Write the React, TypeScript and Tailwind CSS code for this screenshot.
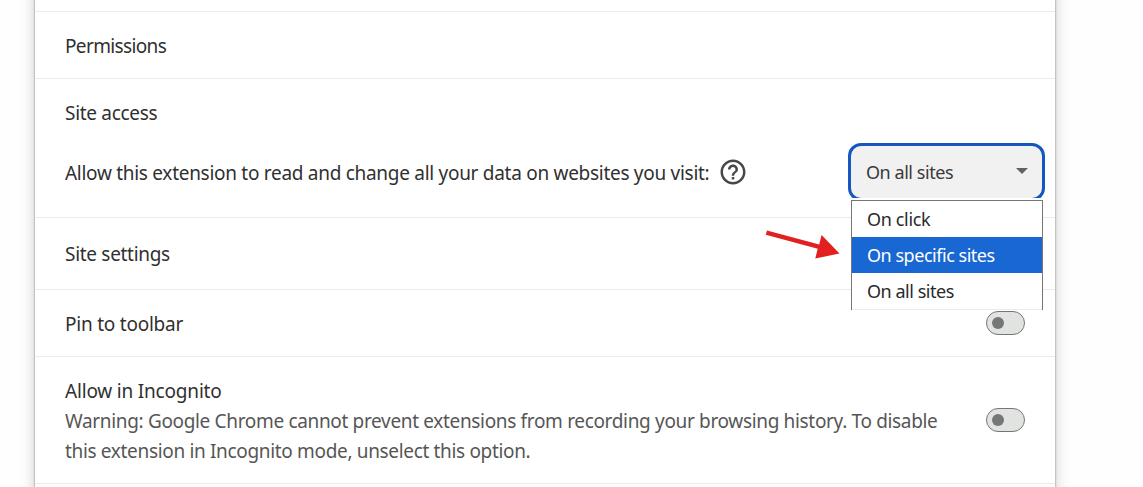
import React from "react";

function Toggle() {
  return (
    <button
      role="switch"
      aria-checked="false"
      className="flex h-6 w-[39px] shrink-0 items-center rounded-full border border-[#747775] bg-[#e1e3e1] pl-[5px]"
    >
      <span className="size-3 rounded-full bg-[#747775]" />
    </button>
  );
}

function HelpIcon() {
  return (
    <svg viewBox="0 0 24 24" className="ml-[9px] size-[30px] shrink-0" fill="#474747">
      <path d="M11 18h2v-2h-2v2zm1-16C6.480 2 2 6.480 2 12s4.480 10 10 10 10-4.480 10-10S17.520 2 12 2zm0 18c-4.410 0-8-3.590-8-8s3.590-8 8-8 8 3.590 8 8-3.590 8-8 8zm0-14c-2.210 0-4 1.790-4 4h2c0-1.100.9-2 2-2s2 .9 2 2c0 2-3 1.750-3 5h2c0-2.250 3-2.500 3-5 0-2.210-1.790-4-4-4z" />
    </svg>
  );
}

function SiteAccessSelect() {
  return (
    <div className="relative h-[55px] w-[197px] shrink-0">
      <div className="h-full overflow-hidden">
        <div className="flex h-[58px] items-center justify-between rounded-[13px] border-3 border-[#1657bf] bg-[#f1f1f1] pr-[14px] pl-[15px] text-[18px] text-[#3a3a3a]">
          <span className="tracking-[-0.45px]">On all sites</span>
          <svg viewBox="0 0 12 6" className="-mt-[2px] h-[6px] w-[12px]" fill="#5f6368">
            <path d="M0 0h12L6 6z" />
          </svg>
        </div>
      </div>
      <ul className="absolute top-[57px] left-[3px] h-[110px] w-[192px] border border-b-0 border-[#767676] bg-white text-[18px] leading-9 text-[#2a2a2a]">
        <li className="h-9 pl-[15px] tracking-[-0.35px]">On click</li>
        <li className="h-9 bg-[#1967d2] pl-[15px] tracking-[-0.47px] text-white">On specific sites</li>
        <li className="h-[37px] border-b border-[#ebebeb] pl-[15px] tracking-[-0.47px]">On all sites</li>
      </ul>
    </div>
  );
}

export default function App() {
  return (
    <div className="flex h-[487px] items-center overflow-hidden bg-[#fefefe] font-['Noto_Sans',sans-serif] text-[19px] leading-[30px] text-[#303030]">
      <main className="ml-[35px] h-[527px] w-[1020px] shrink-0 bg-white pt-5 shadow-[0_0_2px_rgba(0,0,0,0.45),0_0_14px_rgba(0,0,0,0.2)]">
        <div className="h-3 border-b border-[#ebebeb]" />
        <section className="flex h-[67px] items-center border-b border-[#ebebeb] pt-[2px] pl-[30px]">
          <h2 className="tracking-[-0.64px]">Permissions</h2>
        </section>
        <section className="h-[139px] border-b border-[#ebebeb] pt-[19px] pr-[10px] pl-[30px]">
          <h2 className="tracking-[-0.3px]">Site access</h2>
          <div className="mt-[15px] flex items-start justify-between">
            <div className="flex h-[58px] items-center">
              <span className="pt-[2px] whitespace-nowrap tracking-[-0.287px]">
                Allow this extension to read and change all your data on websites you visit:
              </span>
              <HelpIcon />
            </div>
            <SiteAccessSelect />
          </div>
        </section>
        <section className="flex h-[72px] items-center border-b border-[#ebebeb] pl-[30px]">
          <h2 className="tracking-[-0.3px]">Site settings</h2>
        </section>
        <section className="flex h-[67px] items-center justify-between border-b border-[#ebebeb] pr-[30px] pl-[30px]">
          <h2 className="pt-[2px] tracking-[-0.23px]">Pin to toolbar</h2>
          <Toggle />
        </section>
        <section className="flex h-[127px] items-center justify-between border-b border-[#ebebeb] pr-[30px] pl-[30px]">
          <div className="pt-[2px] whitespace-nowrap">
            <h2 className="tracking-[-0.19px]">Allow in Incognito</h2>
            <p className="tracking-[-0.335px] text-[#565656]">
              Warning: Google Chrome cannot prevent extensions from recording your browsing history. To disable
            </p>
            <p className="tracking-[-0.335px] text-[#565656]">
              this extension in Incognito mode, unselect this option.
            </p>
          </div>
          <Toggle />
        </section>
      </main>
      <svg viewBox="0 0 76 32" className="absolute top-[228px] left-[764px] h-8 w-[76px]" fill="#e3201f">
        <path d="M3 2.500L55.200 16.500 57.600 7 75.500 25.500 51.300 30.500 53.700 20.800 1.800 6.800z" />
      </svg>
    </div>
  );
}
